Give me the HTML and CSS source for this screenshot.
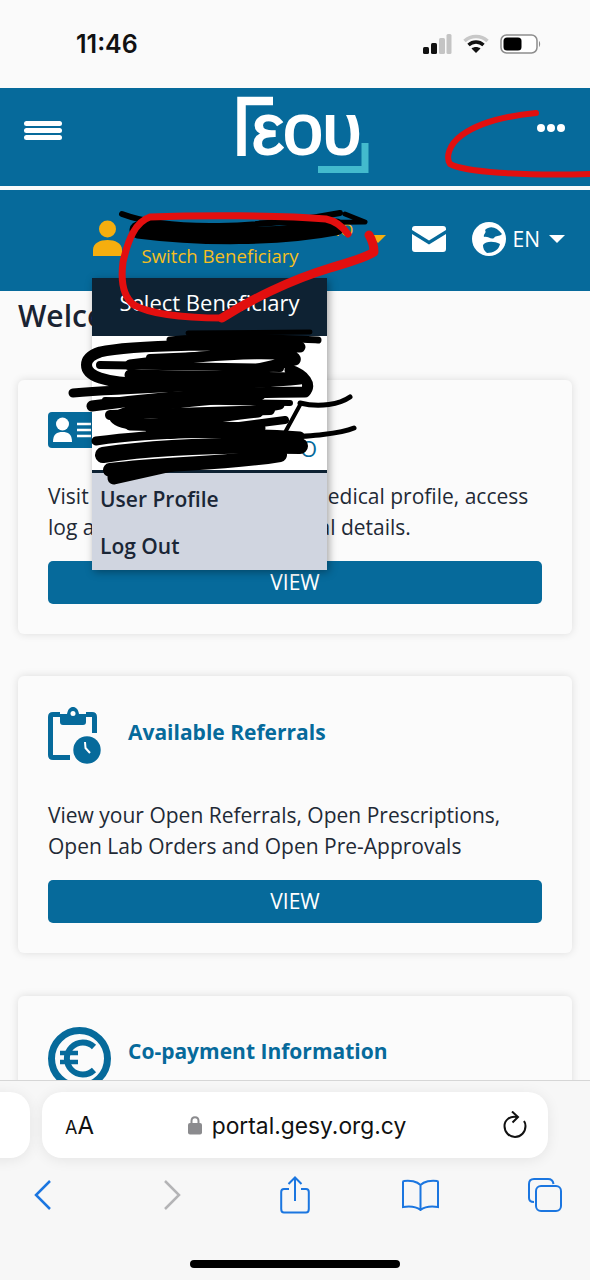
FILE: index.html
```html
<!DOCTYPE html>
<html lang="en">
<head>
  <meta charset="UTF-8">
  <meta name="viewport" content="width=device-width, initial-scale=1.0">
  <title>GESY Portal</title>
  <link rel="stylesheet" href="styles.css">
</head>
<body>
  <div class="phone">

    <div class="status-bar">
      <span class="clock">11:46</span>
      <div class="status-icons">
        <svg width="30" height="20" viewBox="0 0 30 20">
          <rect x="1" y="13" width="6" height="7" rx="1.5" fill="#111"/>
          <rect x="9" y="9" width="6" height="11" rx="1.5" fill="#111"/>
          <rect x="17" y="4" width="6" height="16" rx="1.5" fill="#c4c4c4"/>
          <rect x="24.500" y="0" width="5" height="20" rx="1.5" fill="#c4c4c4"/>
        </svg>
        <svg width="26" height="20" viewBox="0 0 26 20">
          <path d="M1.500 7 C8 1 18 1 24.500 7" fill="none" stroke="#c8c8c8" stroke-width="3.500"/>
          <path d="M5.500 11 C10 7 16 7 20.500 11" fill="none" stroke="#111" stroke-width="3.500"/>
          <path d="M13 19 L8.500 14.500 C11 12.500 15 12.500 17.500 14.500 Z" fill="#111"/>
        </svg>
        <svg width="41" height="20" viewBox="0 0 41 20">
          <rect x="1" y="1" width="36" height="18" rx="5.500" fill="#fff" stroke="#8d8d8d" stroke-width="1.500"/>
          <rect x="3.500" y="3.500" width="18" height="13" rx="3.500" fill="#000"/>
          <path d="M39 7 C40.500 8 40.500 12 39 13 Z" fill="#8d8d8d"/>
        </svg>
      </div>
    </div>

    <header class="top-header">
      <div class="hamburger"><span></span><span></span><span></span></div>
      <svg class="logo" width="136" height="80" viewBox="0 0 136 80">
        <path d="M4.500 59 V4 H36" fill="none" stroke="#fff" stroke-width="8.500"/>
        <text class="logo-letters" x="15" y="57">εου</text>
        <path d="M81 72.500 H128 V46" fill="none" stroke="#43bacd" stroke-width="7"/>
      </svg>
      <div class="dots"><span></span><span></span><span></span></div>
    </header>

    <nav class="user-bar">
      <div class="user">
        <svg class="user-icon" width="29" height="36" viewBox="0 0 29 36">
          <circle cx="14.500" cy="9" r="8.500" fill="#f6ae0e"/>
          <path d="M0 36 V30 C0 23 7 20 14.500 20 C22 20 29 23 29 30 V36 Z" fill="#f6ae0e"/>
        </svg>
        <div class="user-names">
          <span class="user-name">NO</span>
          <span class="user-switch">Switch Beneficiary</span>
        </div>
        <span class="caret caret-yellow"></span>
      </div>
      <svg class="mail-icon" width="34" height="26" viewBox="0 0 34 26">
        <path d="M3 0 H31 C33 0 34 1 34 3 V4 L17 14.500 L0 4 V3 C0 1 1 0 3 0 Z" fill="#fff"/>
        <path d="M0 8 L17 18.500 L34 8 V23 C34 25 33 26 31 26 H3 C1 26 0 25 0 23 Z" fill="#fff"/>
      </svg>
      <svg class="globe-icon" width="34" height="34" viewBox="0 0 34 34">
        <circle cx="17" cy="17" r="17" fill="#fff"/>
        <path d="M13 8 C18 3 25 5 30 12 C27 15 24 13 22 16 C19 18 16 14 12 15 C11 12 15 11 13 8 Z" fill="#066a9b"/>
        <path d="M11 23 C14 19 22 19 28 22 C27 28 21 31 15 31 C12 29 11 26 11 23 Z" fill="#066a9b"/>
      </svg>
      <span class="lang">EN</span>
      <span class="caret"></span>
    </nav>

    <main class="content">
      <h1 class="welcome">Welcome</h1>

      <section class="card">
        <div class="card-head card-head-small">
          <svg width="58" height="36" viewBox="0 0 58 36">
            <rect width="58" height="36" rx="4" fill="#066a9b"/>
            <circle cx="14.500" cy="12" r="6.500" fill="#fff"/>
            <path d="M5 30 C5 22 9 20 14.500 20 C20 20 24 22 24 30 Z" fill="#fff"/>
            <path d="M29 12 H43 M29 18 H43 M29 24 H43" stroke="#fff" stroke-width="2.500"/>
          </svg>
          <h2 class="card-title">User Profile</h2>
        </div>
        <p class="card-text">Visit your profile to review medical profile, access log and amend your personal details.</p>
        <button class="btn" type="button">VIEW</button>
      </section>

      <section class="card">
        <div class="card-head">
          <svg width="53" height="56" viewBox="0 0 53 56">
            <path d="M12 8.500 H5 C3 8.500 2.500 9 2.500 11 V49 C2.500 51 3 51.500 5 51.500 H22 M46.500 27 V11 C46.500 9 46 8.500 44 8.500 H38" fill="none" stroke="#066a9b" stroke-width="5"/>
            <path d="M12 8 H19 C20 3 22 1 25 1 C28 1 30 3 31 8 H38 V16 C38 18 37 19 35 19 H15 C13 19 12 18 12 16 Z" fill="#066a9b"/>
            <circle cx="25" cy="7.500" r="2.500" fill="#fff"/>
            <circle cx="39" cy="44" r="13.700" fill="#066a9b"/>
            <path d="M37 36 L37.500 42 L42 47" fill="none" stroke="#fff" stroke-width="2"/>
          </svg>
          <h2 class="card-title card-title-up">Available Referrals</h2>
        </div>
        <p class="card-text">View your Open Referrals, Open Prescriptions, Open Lab Orders and Open Pre-Approvals</p>
        <button class="btn" type="button">VIEW</button>
      </section>

      <section class="card">
        <div class="card-head card-head-euro">
          <svg width="63" height="63" viewBox="0 0 63 63">
            <circle cx="31.500" cy="31.500" r="28" fill="none" stroke="#066a9b" stroke-width="7"/>
            <path d="M46 20 A16 16 0 1 0 46 43" fill="none" stroke="#066a9b" stroke-width="6"/>
            <path d="M12 26 H30 M12 35 H30" stroke="#066a9b" stroke-width="4.500"/>
          </svg>
          <h2 class="card-title">Co-payment Information</h2>
        </div>
      </section>
    </main>

    <div class="dropdown">
      <div class="dropdown-head">Select Beneficiary</div>
      <div class="dropdown-list"><span class="dropdown-name">O</span></div>
      <div class="dropdown-links">
        <a class="dropdown-link">User Profile</a>
        <a class="dropdown-link">Log Out</a>
      </div>
    </div>

    <!-- marks drawn by hand on top of the screenshot -->
    <svg class="scribbles" width="590" height="1280" viewBox="0 0 590 1280">
      <g fill="none" stroke="#000" stroke-linecap="round" stroke-linejoin="round">
        <path d="M122 214 C170 232 260 228 340 213" stroke-width="6"/>
        <path d="M345 214 L365 222 L260 223" stroke-width="5"/>
        <path d="M138 230 C200 238 280 238 336 227" stroke-width="17"/>
        <path d="M188 333 L310 332" stroke-width="5"/>
        <path d="M170 340 C220 335 270 338 318 340" stroke-width="7"/>
        <path d="M300 347 C240 343 130 345 100 352 C82 358 82 372 100 378 C130 388 200 385 295 360 C300 352 240 350 130 365" stroke-width="11"/>
        <path d="M150 358 L290 352" stroke-width="8"/>
        <path d="M100 365 L280 368" stroke-width="8"/>
        <path d="M130 375 L295 378" stroke-width="11"/>
        <path d="M73 393 C150 387 230 387 300 380" stroke-width="9"/>
        <path d="M92 406 C170 395 250 392 305 392 C312 385 305 375 290 370" stroke-width="11"/>
        <path d="M105 400 L290 403" stroke-width="6"/>
        <path d="M300 403 C320 408 340 404 350 397" stroke-width="5"/>
        <path d="M260 395 C200 400 130 405 115 418 C125 432 190 420 258 412" stroke-width="11"/>
        <path d="M110 415 L270 410" stroke-width="10"/>
        <path d="M150 430 L280 405" stroke-width="9"/>
        <path d="M130 425 L260 428" stroke-width="11"/>
        <path d="M170 435 L285 420" stroke-width="8"/>
        <path d="M282 438 L300 405" stroke-width="4"/>
        <path d="M96 441 C160 432 240 432 300 436" stroke-width="9"/>
        <path d="M280 438 C310 436 340 434 354 428" stroke-width="5"/>
        <path d="M103 455 C170 445 250 445 300 446" stroke-width="16"/>
        <path d="M110 470 C170 462 220 465 280 455" stroke-width="14"/>
        <path d="M114 478 L172 465" stroke-width="13"/>
      </g>
      <g fill="none" stroke="#e20f0f" stroke-linecap="round" stroke-linejoin="round">
        <path d="M536 113 C505 116 480 122 462 135 C448 145 446 158 450 164 C465 172 520 176 590 174" stroke-width="6"/>
        <path d="M348 234 C342 226 336 221 326 219 C280 215 200 215 150 217 C135 222 128 240 123 262 C120 285 125 298 134 305" stroke-width="7"/>
        <path d="M134 305 C150 314 185 318 222 318" stroke-width="7"/>
        <path d="M222 318 C250 300 290 280 330 268 C350 262 365 258 374 252 C374 246 372 240 369 235" stroke-width="9"/>
      </g>
    </svg>

    <div class="safari-bar">
      <div class="address-row">
        <div class="tab-stub"></div>
        <div class="address">
          <span class="aa"><small>A</small>A</span>
          <div class="url">
            <svg width="14" height="20" viewBox="0 0 14 20">
              <path d="M3.500 9 V6 C3.500 1 10.500 1 10.500 6 V9" fill="none" stroke="#8b8b8e" stroke-width="2"/>
              <rect y="8" width="14" height="11.500" rx="2" fill="#8b8b8e"/>
            </svg>
            <span>portal.gesy.org.cy</span>
          </div>
          <svg width="24" height="28" viewBox="0 0 24 28">
            <path d="M14 6 C7 4.500 1.500 9 1.500 15 C1.500 21 6 26 12 26 C18 26 22.500 21 22.500 15 C22.500 13 22 11.500 21 10" fill="none" stroke="#111" stroke-width="2"/>
            <path d="M9 0.500 L15 6 L9.500 11.500" fill="none" stroke="#111" stroke-width="2"/>
          </svg>
        </div>
      </div>
      <div class="tool-row">
        <svg width="18" height="32" viewBox="0 0 18 32"><path d="M16 2 L2 16 L16 30" fill="none" stroke="#1b76e0" stroke-width="2.500"/></svg>
        <svg width="18" height="32" viewBox="0 0 18 32"><path d="M2 2 L16 16 L2 30" fill="none" stroke="#b4b4b6" stroke-width="2.500"/></svg>
        <svg width="30" height="38" viewBox="0 0 30 38">
          <path d="M9 13 H4 C2 13 1.200 14 1.200 16 V33 C1.200 35.500 2 36.500 4 36.500 H26 C28 36.500 28.800 35.500 28.800 33 V16 C28.800 14 28 13 26 13 H21" fill="none" stroke="#1b76e0" stroke-width="2"/>
          <path d="M15 25 V2 M8.500 8 L15 1.500 L21.500 8" fill="none" stroke="#1b76e0" stroke-width="2"/>
        </svg>
        <svg width="37" height="32" viewBox="0 0 37 32">
          <path d="M18.500 6 C15 2.500 8 1 2 2 C1.400 2 1 2.500 1 3 V28 C7 27 14 27.500 18.500 31 C23 27.500 30 27 36 28 V3 C36 2.500 35.600 2 35 2 C29 1 22 2.500 18.500 6 V31" fill="none" stroke="#1b76e0" stroke-width="2"/>
        </svg>
        <svg width="34" height="34" viewBox="0 0 34 34">
          <path d="M6 24 C2.500 24 1 22.500 1 20 V6 C1 3 2.500 1 6 1 H20 C23 1 25 2.500 25.500 6" fill="none" stroke="#1b76e0" stroke-width="2"/>
          <rect x="8" y="8" width="25" height="25" rx="5" fill="none" stroke="#1b76e0" stroke-width="2"/>
        </svg>
      </div>
      <div class="home-bar"></div>
    </div>

  </div>
</body>
</html>
```

FILE: styles.css
```css
* {
  box-sizing: border-box;
}

body {
  margin: 0;
  font-family: "Open Sans", sans-serif;
  background: #fafafa;
  color: #1a2332;
}

.phone {
  position: relative;
  width: 590px;
  height: 1280px;
  overflow: hidden;
  background: #fafafa;
}

/* status bar */
.status-bar {
  display: flex;
  justify-content: space-between;
  align-items: center;
  height: 88px;
  padding: 0 49px 0 76px;
}

.clock {
  font-family: Inter, sans-serif;
  font-size: 25px;
  font-weight: 600;
  color: #111;
}

.status-icons {
  display: flex;
  align-items: center;
  gap: 11px;
}

/* blue bars */
.top-header {
  display: flex;
  justify-content: space-between;
  align-items: center;
  height: 98px;
  padding: 0 25px 0 24px;
  background: #066a9b;
}

.hamburger {
  display: flex;
  flex-direction: column;
  gap: 2px;
  width: 38px;
  margin-bottom: 14px;
}

.hamburger span {
  height: 5px;
  border-radius: 3px;
  background: #fff;
}

.logo {
  margin-left: 10px;
  margin-top: 9px;
  align-self: flex-start;
  overflow: visible;
}

.logo-letters {
  font-family: "Liberation Sans", sans-serif;
  font-size: 72px;
  fill: #fff;
  stroke: #fff;
  stroke-width: 2px;
  letter-spacing: -1px;
}

.dots {
  display: flex;
  gap: 2px;
  margin-bottom: 18px;
}

.dots span {
  width: 8px;
  height: 8px;
  border-radius: 50%;
  background: #fff;
}

.user-bar {
  display: flex;
  justify-content: flex-end;
  align-items: center;
  height: 101px;
  margin-top: 4px;
  padding: 0 25px 4px 0;
  background: #066a9b;
  color: #fff;
}

.user {
  display: flex;
  align-items: center;
  margin-right: 26px;
}

.user-icon {
  margin-right: 20px;
  margin-top: -2px;
}

.user-names {
  display: flex;
  flex-direction: column;
  width: 228px;
  padding-top: 10px;
}

.user-name {
  font-size: 17px;
  line-height: 24px;
  color: #f0b91e;
  text-align: right;
  padding-right: 16px;
}

.user-switch {
  font-size: 18.600px;
  font-weight: 500;
  line-height: 28px;
  color: #f5bf1f;
}

.caret {
  width: 0;
  height: 0;
  border-left: 8px solid transparent;
  border-right: 8px solid transparent;
  border-top: 8px solid #fff;
}

.caret-yellow {
  border-top-color: #f6ae0e;
}

.mail-icon {
  margin-right: 26px;
}

.lang {
  margin: 0 9px 0 7px;
  font-size: 21px;
}

/* page content */
.content {
  padding: 0 18px;
}

.welcome {
  margin: 0;
  height: 89px;
  font-size: 30px;
  font-weight: 600;
  line-height: 50px;
}

.card {
  display: flex;
  flex-direction: column;
  height: 277px;
  margin-bottom: 43px;
  padding: 30px;
  background: #fbfbfb;
  border-radius: 6px;
  box-shadow: 0 0 8px rgba(0, 0, 0, 0.12);
}

.card:first-of-type {
  height: 254px;
  margin-bottom: 42px;
}

.card-head {
  display: flex;
  align-items: center;
  gap: 27px;
  height: 56px;
  margin-bottom: 38px;
}

.card-head svg {
  overflow: visible;
}

.card-head-small {
  height: 36px;
  margin-top: 2px;
  margin-bottom: 33px;
  gap: 16px;
}

.card-head-euro {
  gap: 17px;
  margin-top: 1px;
  align-items: flex-start;
}

.card-head-euro .card-title {
  margin-top: 10px;
}

.card-title {
  margin: 0;
  font-size: 21px;
  font-weight: 700;
  color: #066a9b;
}

.card-title-up {
  margin-top: -4px;
}

.card-text {
  margin: 0 0 18px;
  font-size: 21px;
  line-height: 31px;
  color: #1f2a36;
}

.btn {
  height: 44px;
  padding-bottom: 3px;
  border: none;
  border-radius: 5px;
  background: #066a9b;
  color: #fff;
  font-family: inherit;
  font-size: 21px;
}

/* beneficiary menu */
.dropdown {
  position: absolute;
  left: 92px;
  top: 278px;
  width: 235px;
  height: 292px;
  display: flex;
  flex-direction: column;
  background: #fff;
  box-shadow: 2px 2px 8px rgba(0, 0, 0, 0.35);
}

.dropdown-head {
  flex-shrink: 0;
  height: 58px;
  background: #0e2233;
  color: #fff;
  font-size: 22px;
  line-height: 48px;
  text-align: center;
}

.dropdown-list {
  flex-shrink: 0;
  display: flex;
  justify-content: flex-end;
  align-items: flex-end;
  height: 137px;
  padding: 0 10px 10px;
  border-bottom: 3px solid #0e2233;
}

.dropdown-name {
  font-size: 22px;
  line-height: 24px;
  color: #066a9b;
}

.dropdown-links {
  flex: 1;
  display: flex;
  flex-direction: column;
  padding: 8px 8px 6px;
  gap: 11px;
  background: #d0d5e0;
}

.dropdown-link {
  font-size: 21px;
  font-weight: 600;
  line-height: 36px;
  color: #1a2636;
}

.scribbles {
  position: absolute;
  left: 0;
  top: 0;
  pointer-events: none;
}

/* safari chrome */
.safari-bar {
  position: absolute;
  left: 0;
  bottom: 0;
  width: 590px;
  height: 200px;
  background: #f7f7f7;
  border-top: 1px solid #d6d6d6;
}

.address-row {
  display: flex;
  gap: 12px;
  margin: 11px 42px 0 -80px;
}

.tab-stub,
.address {
  height: 66px;
  background: #fff;
  border-radius: 20px;
  box-shadow: 0 2px 14px rgba(0, 0, 0, 0.08);
}

.tab-stub {
  width: 110px;
  flex-shrink: 0;
}

.address {
  flex: 1;
  display: flex;
  align-items: center;
  justify-content: space-between;
  padding: 0 21px 0 23px;
}

.aa {
  font-family: Inter, sans-serif;
  font-size: 24px;
  color: #111;
}

.aa small {
  font-size: 18px;
}

.url {
  display: flex;
  align-items: center;
  gap: 10px;
  margin-right: 3px;
  font-family: Inter, sans-serif;
  font-size: 22.800px;
  color: #111;
}

.tool-row {
  display: flex;
  align-items: center;
  height: 44px;
  margin-top: 15px;
  padding-left: 34px;
}

.tool-row svg:nth-child(2) {
  margin-left: 111px;
}

.tool-row svg:nth-child(3) {
  margin-left: 99px;
}

.tool-row svg:nth-child(4) {
  margin-left: 92px;
}

.tool-row svg:nth-child(5) {
  margin-left: 89px;
}

.home-bar {
  position: absolute;
  left: 190px;
  bottom: 12px;
  width: 210px;
  height: 8px;
  border-radius: 4px;
  background: #000;
}
```
